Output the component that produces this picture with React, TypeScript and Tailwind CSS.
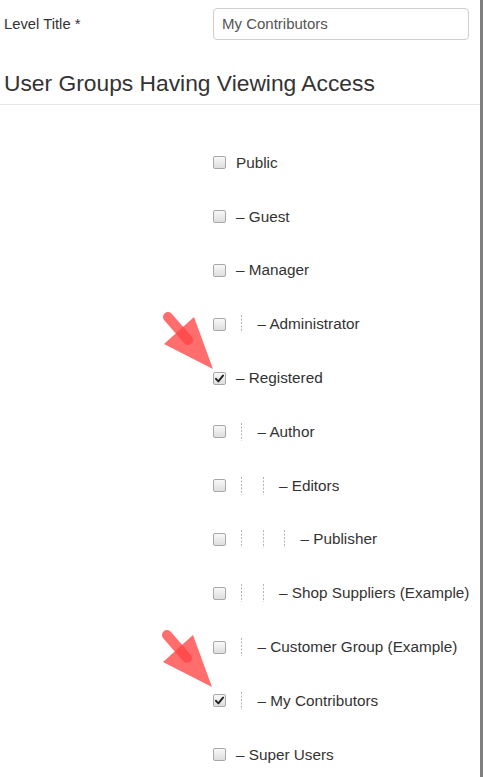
import React from "react";

type Item = { label: string; level: number; dash: boolean; checked?: boolean; arrow?: { left: number; top: number } };

const items: Item[] = [
  { label: "Public", level: 0, dash: false },
  { label: "Guest", level: 0, dash: true },
  { label: "Manager", level: 0, dash: true },
  { label: "Administrator", level: 1, dash: true },
  { label: "Registered", level: 0, dash: true, checked: true, arrow: { left: 158, top: -41 } },
  { label: "Author", level: 1, dash: true },
  { label: "Editors", level: 2, dash: true },
  { label: "Publisher", level: 3, dash: true },
  { label: "Shop Suppliers (Example)", level: 2, dash: true },
  { label: "Customer Group (Example)", level: 1, dash: true },
  { label: "My Contributors", level: 1, dash: true, checked: true, arrow: { left: 157, top: -46 } },
  { label: "Super Users", level: 0, dash: true },
];

function Arrow({ left, top }: { left: number; top: number }) {
  return (
    <svg
      className="absolute pointer-events-none"
      style={{ left, top }}
      width="60"
      height="62"
      viewBox="0 0 60 62"
    >
      <line x1="10" y1="7" x2="30" y2="30" stroke="#ff4444" strokeOpacity="0.78" strokeWidth="10" strokeLinecap="round" />
      <polygon points="36,7 6,34 55,59" fill="#ff4444" fillOpacity="0.78" />
    </svg>
  );
}

function Checkbox({ checked }: { checked?: boolean }) {
  return (
    <span className="relative flex h-[13px] w-[13px] shrink-0 items-center justify-center rounded-[2px] border border-[#a8a8a8] bg-gradient-to-b from-[#f8f8f8] to-[#dedede]">
      {checked && (
        <svg width="9" height="9" viewBox="0 0 9 9">
          <path d="M1 4.8 L3.4 7.4 L8 1.6" fill="none" stroke="#222" strokeWidth="1.9" strokeLinecap="round" strokeLinejoin="round" />
        </svg>
      )}
    </span>
  );
}

function Guide() {
  return (
    <span className="flex h-[18px] w-[21.5px] shrink-0 pl-[5px]">
      <svg width="1" height="18" viewBox="0 0 1 18">
        <line x1="0.5" y1="0" x2="0.5" y2="18" stroke="#b5b5b5" strokeWidth="1" strokeDasharray="2 1.5" />
      </svg>
    </span>
  );
}

export default function App() {
  return (
    <div
      className="flex h-[777px] w-[483px] bg-white text-[#333]"
      style={{ fontFamily: '"Liberation Sans", Arial, Helvetica, sans-serif' }}
    >
      <div className="flex w-[480px] flex-col">
        <div className="flex items-center pt-[8px]">
          <div className="w-[213px] pl-[4px] text-[14.8px] leading-[20px]">Level Title *</div>
          <div className="flex h-[32px] w-[256px] items-center rounded-[4px] border border-[#cfcfcf] pl-[8px] text-[15px] text-[#555]">
            My Contributors
          </div>
        </div>
        <div className="mt-[30px] border-b border-[#e5e5e5] pb-[8px] pl-[4px] text-[22.8px] leading-[26px]">
          User Groups Having Viewing Access
        </div>
        <div className="flex flex-col pt-[31px]">
          {items.map((it) => (
            <div key={it.label} className="relative flex h-[53.8px] items-center pl-[213px]">
              {it.arrow && <Arrow left={it.arrow.left} top={it.arrow.top} />}
              <Checkbox checked={it.checked} />
              <span className="flex items-center pl-[10px] text-[15.3px] leading-[20px]">
                {Array.from({ length: it.level }).map((_, i) => (
                  <Guide key={i} />
                ))}
                <span>{it.dash ? "– " + it.label : it.label}</span>
              </span>
            </div>
          ))}
        </div>
      </div>
      <div className="w-[3px] bg-[#7f7f7f]" />
    </div>
  );
}
